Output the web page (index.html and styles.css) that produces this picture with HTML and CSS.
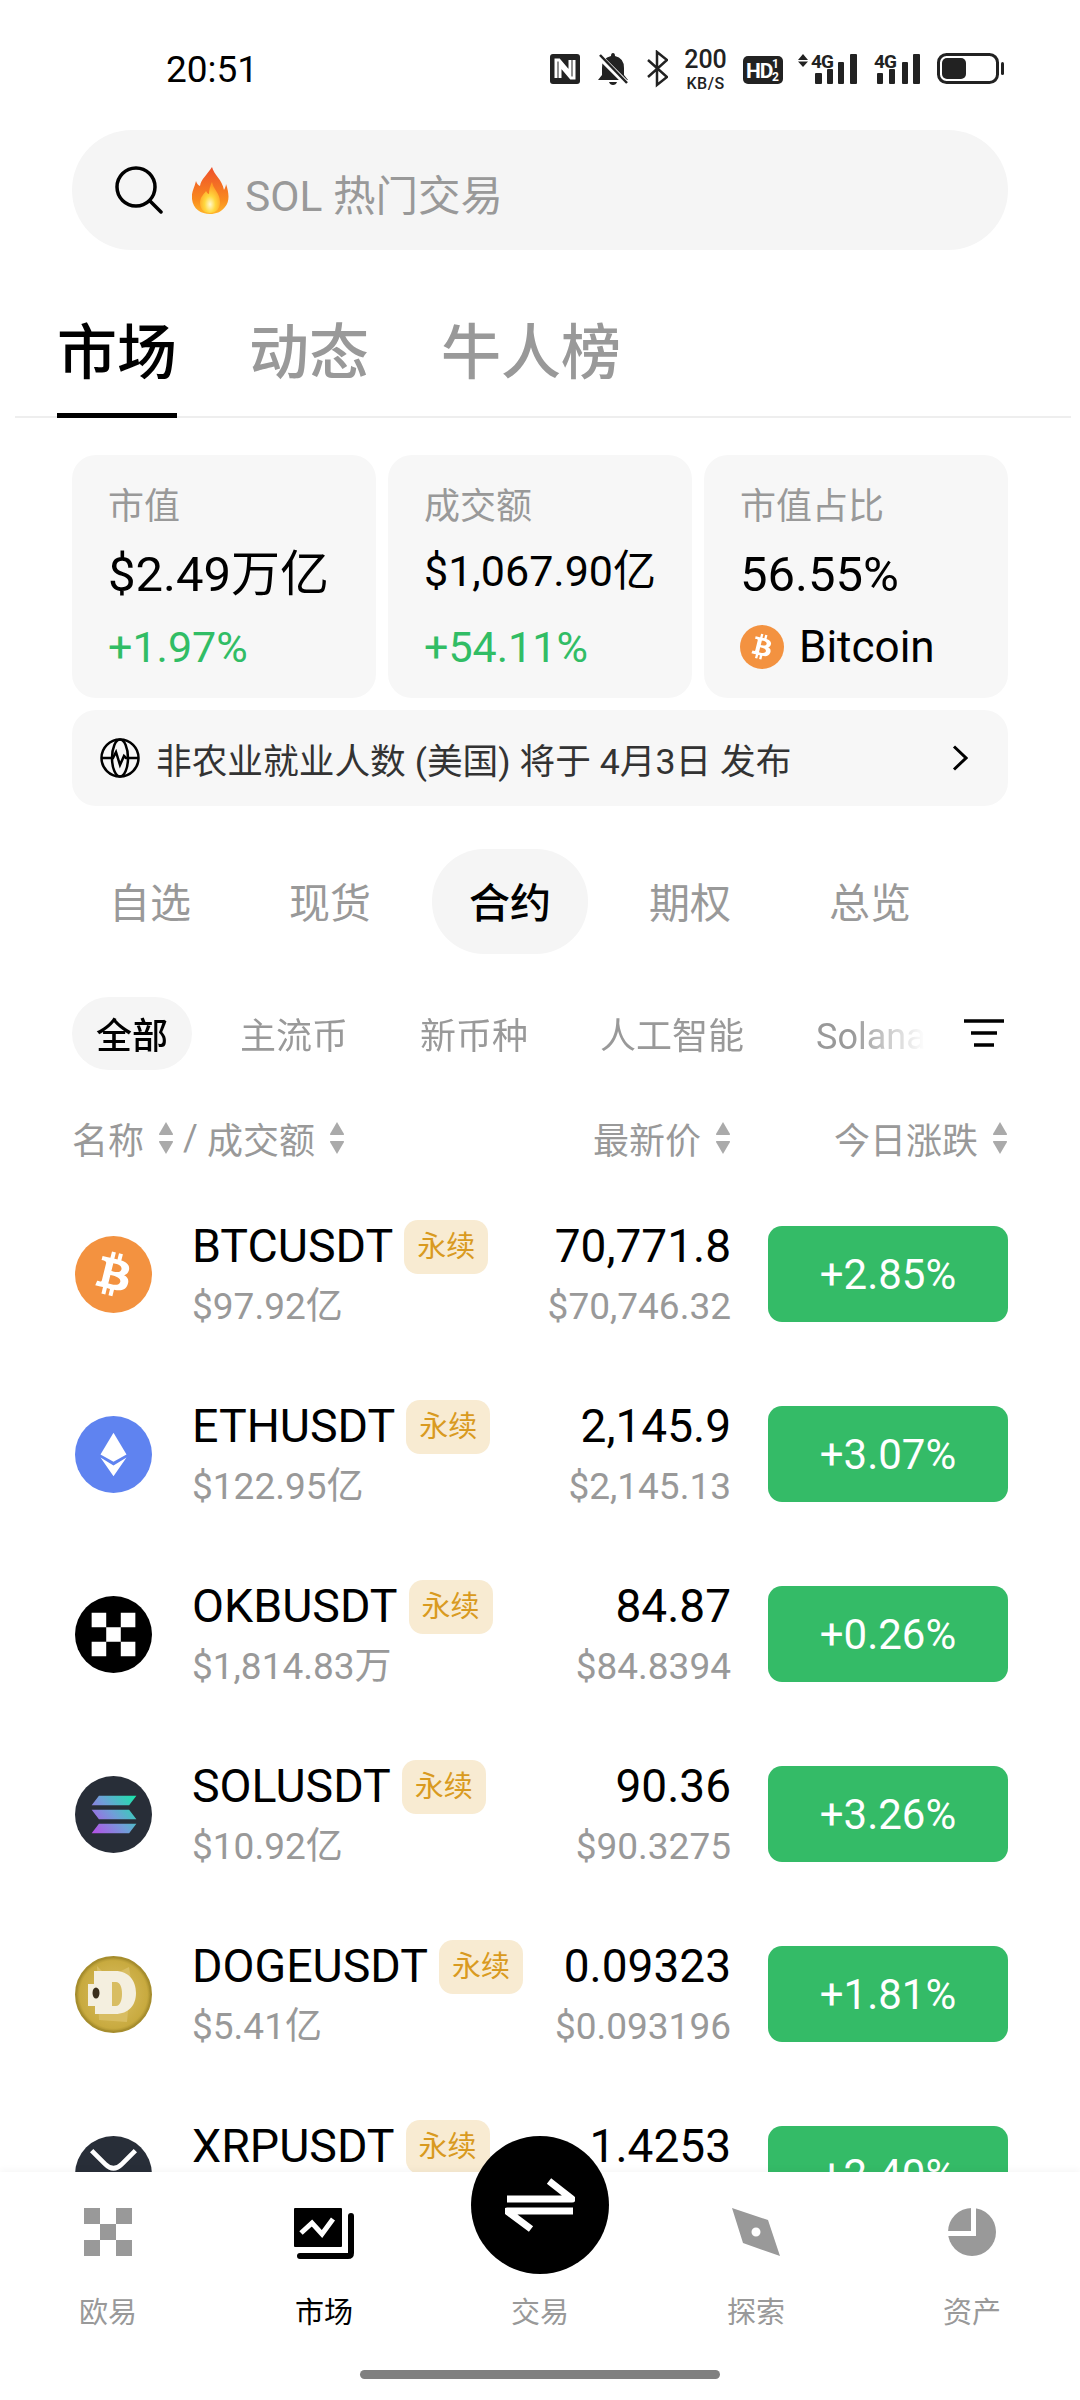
FILE: index.html
```html
<!DOCTYPE html>
<html lang="zh-CN">
<head>
    <meta charset="UTF-8">
    <meta name="viewport" content="width=device-width, initial-scale=1.0">
    <title>市场</title>
    <link rel="stylesheet" href="styles.css">
</head>
<body>
    <svg class="defs" width="0" height="0">
        <defs>
            <symbol id="sort" viewBox="0 0 16 34">
                <path d="M8 1 15 13Q15.500 14 14 14H2Q.5 14 1 13Z"/>
                <path d="M8 33 15 21Q15.500 20 14 20H2Q.5 20 1 21Z"/>
            </symbol>
            <symbol id="btc-b" viewBox="0 0 24 24">
                <path fill-rule="evenodd" d="M17.288 10.291c.24-1.59-.974-2.45-2.64-3.03l.54-2.153-1.315-.33-.525 2.107c-.345-.087-.705-.167-1.064-.25l.526-2.127-1.32-.33-.54 2.165c-.285-.067-.565-.132-.84-.2l-1.815-.45-.35 1.407s.975.225.955.236c.535.136.63.486.615.766l-1.477 5.92c-.075.166-.24.406-.614.314.015.02-.96-.24-.96-.24l-.66 1.51 1.71.426.93.242-.54 2.19 1.32.327.54-2.17c.36.1.705.19 1.05.273l-.51 2.154 1.32.33.545-2.19c2.24.427 3.93.257 4.64-1.774.57-1.637-.03-2.58-1.217-3.196.854-.193 1.5-.76 1.68-1.93h.01zm-3.01 4.22c-.404 1.64-3.157.75-4.05.53l.72-2.9c.896.23 3.757.67 3.33 2.37zm.41-4.24c-.37 1.49-2.662.735-3.405.55l.654-2.64c.744.18 3.137.524 2.75 2.084v.006z"/>
            </symbol>
            <linearGradient id="fire-body" x1="0" y1="0" x2="0" y2="1">
                <stop offset="0" stop-color="#ee4f2b"/>
                <stop offset=".7" stop-color="#f98a1f"/>
                <stop offset="1" stop-color="#ffb52a"/>
            </linearGradient>
            <radialGradient id="fire-core" cx=".5" cy=".72" r=".6">
                <stop offset="0" stop-color="#fff8d0"/>
                <stop offset=".45" stop-color="#ffd83f"/>
                <stop offset="1" stop-color="#ff9d24"/>
            </radialGradient>
            <linearGradient id="sol-bars" gradientUnits="userSpaceOnUse" x1="59" y1="19" x2="16" y2="55">
                <stop offset="0" stop-color="#17e6a8"/>
                <stop offset=".5" stop-color="#6f9fd8"/>
                <stop offset="1" stop-color="#b84de8"/>
            </linearGradient>
            <radialGradient id="doge-coin" cx=".5" cy=".5" r=".5">
                <stop offset="0" stop-color="#dcc168"/>
                <stop offset=".9" stop-color="#c8aa3f"/>
                <stop offset="1" stop-color="#a68d2d"/>
            </radialGradient>
        </defs>
    </svg>

    <div class="app">
        <!-- status bar -->
        <div class="status">
            <span class="time">20:51</span>
            <div class="status-icons">
                <svg width="118" height="38" viewBox="550 50 118 38">
                    <rect x="550" y="54" width="30" height="30" rx="3" fill="#222"/>
                    <path d="M556 78V60H559L570 73V60M574 60V78H571L560 65V78" fill="none" stroke="#fff" stroke-width="3"/>

                    <path d="M613 53Q615 53 615 56Q624 58 624 68V75L628 80H598L602 75V68Q602 58 611 56Q611 53 613 53ZM609 82H617Q616 85 613 85Q610 85 609 82Z" fill="#222"/>
                    <path d="M599 56 627 84" stroke="#fff" stroke-width="6"/>
                    <path d="M600 55 627 83" stroke="#222" stroke-width="2.500"/>

                    <path d="M648 60 667 77 657 85V52L667 60 648 77" fill="none" stroke="#222" stroke-width="2.500"/>
                </svg>
                <div class="speed">
                    <span class="speed-num">200</span>
                    <span class="speed-unit">KB/S</span>
                </div>
                <svg width="261" height="38" viewBox="743 50 261 38">
                    <rect x="743" y="56" width="40" height="28" rx="5" fill="#222"/>
                    <text class="st-hd" x="746" y="78">HD</text>
                    <text class="st-frac" x="772" y="68">1</text>
                    <text class="st-frac" x="772" y="81">2</text>

                    <path d="M803 54 808 60H798ZM803 67 808 61.500H798Z" fill="#222"/>
                    <text class="st-net" x="811" y="68">4G</text>
                    <g fill="#222">
                        <rect x="815" y="73" width="7" height="11" rx="1"/>
                        <rect x="827" y="69" width="6" height="15" rx="1"/>
                        <rect x="838" y="62" width="6" height="22" rx="1"/>
                        <rect x="850" y="54" width="7" height="30" rx="1"/>
                    </g>

                    <text class="st-net" x="874" y="68">4G</text>
                    <g fill="#222">
                        <rect x="877" y="73" width="6" height="11" rx="1"/>
                        <rect x="889" y="69" width="6" height="15" rx="1"/>
                        <rect x="902" y="62" width="6" height="22" rx="1"/>
                        <rect x="913" y="54" width="7" height="30" rx="1"/>
                    </g>

                    <rect x="938.500" y="54.500" width="59" height="28" rx="8" fill="none" stroke="#222" stroke-width="3"/>
                    <rect x="942" y="58" width="24" height="21" rx="5" fill="#222"/>
                    <rect x="1001" y="62" width="3" height="13" rx="1.500" fill="#222"/>
                </svg>
            </div>
        </div>

        <!-- search -->
        <div class="search">
            <svg class="search-icon" width="48" height="48" viewBox="0 0 48 48">
                <circle cx="21" cy="21" r="19" fill="none" stroke="#000" stroke-width="3.500"/>
                <path d="M35 35 46 46" stroke="#000" stroke-width="3.500" stroke-linecap="round"/>
            </svg>
            <svg class="fire-icon" width="37" height="47" viewBox="0 0 37 47">
                <path fill="url(#fire-body)" d="M20 0C22 8 30 12 32 23C33 21 34 19 34 17C37 26 38 34 33 40C29 45 24 47 18 47C9 47 1 42 0 32C-1 26 2 22 4 14C5 17 6 18 8 19C9 12 15 8 20 0Z"/>
                <path fill="url(#fire-core)" d="M20 15C21 22 28 26 28 35C28 42 24 46 18 46C12 46 8 42 8 36C8 30 12 27 14 24C15 26 16 27 17 27C17 23 18 19 20 15Z"/>
            </svg>
            <span class="search-text">SOL 热门交易</span>
        </div>

        <!-- top tabs -->
        <div class="top-tabs">
            <div class="top-tab active">市场</div>
            <div class="top-tab">动态</div>
            <div class="top-tab">牛人榜</div>
        </div>

        <!-- overview cards -->
        <div class="cards">
            <div class="card">
                <div class="card-label">市值</div>
                <div class="card-value">$2.49万亿</div>
                <div class="card-change">+1.97%</div>
            </div>
            <div class="card">
                <div class="card-label">成交额</div>
                <div class="card-value small">$1,067.90亿</div>
                <div class="card-change">+54.11%</div>
            </div>
            <div class="card">
                <div class="card-label">市值占比</div>
                <div class="card-value">56.55%</div>
                <div class="card-coin">
                    <svg width="44" height="44" viewBox="0 0 44 44">
                        <circle cx="22" cy="22" r="22" fill="#f39240"/>
                        <use href="#btc-b" x="1.500" y="1.500" width="41" height="41" fill="#fff"/>
                    </svg>
                    <span>Bitcoin</span>
                </div>
            </div>
        </div>

        <!-- event banner -->
        <div class="banner">
            <svg width="40" height="40" viewBox="0 0 40 40" fill="none" stroke="#000" stroke-width="2.500">
                <circle cx="20" cy="20" r="18.500"/>
                <ellipse cx="20" cy="20" rx="8" ry="18.500"/>
                <path d="M1 20H13L16 14 20 27 24 18 26 20H39"/>
            </svg>
            <span class="banner-text">非农业就业人数 (美国) 将于 4月3日 发布</span>
            <svg class="chevron" width="16" height="26" viewBox="0 0 16 26">
                <path d="M2 1.500 14 13 2 24.500" fill="none" stroke="#000" stroke-width="3"/>
            </svg>
        </div>

        <!-- market type tabs -->
        <div class="type-tabs">
            <div class="type-tab">自选</div>
            <div class="type-tab">现货</div>
            <div class="type-tab active">合约</div>
            <div class="type-tab">期权</div>
            <div class="type-tab">总览</div>
        </div>

        <!-- category filter -->
        <div class="cats">
            <div class="cat-list">
                <div class="cat active">全部</div>
                <div class="cat">主流币</div>
                <div class="cat">新币种</div>
                <div class="cat">人工智能</div>
                <div class="cat">Solana</div>
            </div>
            <svg class="filter-icon" width="40" height="30" viewBox="0 0 40 30">
                <path d="M0 2H40M7 14H33M10 26H30" stroke="#000" stroke-width="3.500"/>
            </svg>
        </div>

        <!-- list header -->
        <div class="list-head">
            <div class="head-name">
                <span>名称</span>
                <svg class="sort"><use href="#sort"/></svg>
                <span class="head-slash">/</span>
                <span>成交额</span>
                <svg class="sort"><use href="#sort"/></svg>
            </div>
            <div class="head-price">
                <span>最新价</span>
                <svg class="sort"><use href="#sort"/></svg>
            </div>
            <div class="head-change">
                <span>今日涨跌</span>
                <svg class="sort"><use href="#sort"/></svg>
            </div>
        </div>

        <!-- rows -->
        <div class="list">
            <div class="row">
                <svg class="coin" viewBox="0 0 74 74">
                    <circle cx="37" cy="37" r="37" fill="#f39240"/>
                    <use href="#btc-b" x="3" y="3" width="68" height="68" fill="#fff"/>
                </svg>
                <div class="row-name">
                    <div class="symbol-line"><span class="symbol">BTCUSDT</span><span class="badge">永续</span></div>
                    <div class="sub">$97.92亿</div>
                </div>
                <div class="row-price">
                    <div class="price">70,771.8</div>
                    <div class="sub">$70,746.32</div>
                </div>
                <div class="change">+2.85%</div>
            </div>

            <div class="row">
                <svg class="coin" viewBox="0 0 74 74">
                    <circle cx="37" cy="37" r="37" fill="#5f83f0"/>
                    <path d="M37 16 49.500 37 37 44 24.500 37Z" fill="#fff"/>
                    <path d="M24.500 40 37 47.500 49.500 40 37 58Z" fill="#fff"/>
                </svg>
                <div class="row-name">
                    <div class="symbol-line"><span class="symbol">ETHUSDT</span><span class="badge">永续</span></div>
                    <div class="sub">$122.95亿</div>
                </div>
                <div class="row-price">
                    <div class="price">2,145.9</div>
                    <div class="sub">$2,145.13</div>
                </div>
                <div class="change">+3.07%</div>
            </div>

            <div class="row">
                <svg class="coin" viewBox="0 0 74 74">
                    <circle cx="37" cy="37" r="37" fill="#000"/>
                    <path d="M16 16H30V30H16ZM44 16H58V30H44ZM30 30H44V44H30ZM16 44H30V58H16ZM44 44H58V58H44Z" fill="#fff"/>
                </svg>
                <div class="row-name">
                    <div class="symbol-line"><span class="symbol">OKBUSDT</span><span class="badge">永续</span></div>
                    <div class="sub">$1,814.83万</div>
                </div>
                <div class="row-price">
                    <div class="price">84.87</div>
                    <div class="sub">$84.8394</div>
                </div>
                <div class="change">+0.26%</div>
            </div>

            <div class="row">
                <svg class="coin" viewBox="0 0 74 74">
                    <circle cx="37" cy="37" r="37" fill="#282e38"/>
                    <path d="M23 19H59L52 28H16ZM16 32.500H52L59 41.500H23ZM23 46H59L52 55H16Z" fill="url(#sol-bars)"/>
                </svg>
                <div class="row-name">
                    <div class="symbol-line"><span class="symbol">SOLUSDT</span><span class="badge">永续</span></div>
                    <div class="sub">$10.92亿</div>
                </div>
                <div class="row-price">
                    <div class="price">90.36</div>
                    <div class="sub">$90.3275</div>
                </div>
                <div class="change">+3.26%</div>
            </div>

            <div class="row">
                <svg class="coin" viewBox="0 0 77 77">
                    <circle cx="38.500" cy="38.500" r="37.500" fill="url(#doge-coin)" stroke="#a68d2d" stroke-width="2"/>
                    <path d="M22 10 27 15H46L54 11 56 24 52 66 24 64Z" fill="#d8bd62"/>
                    <path fill-rule="evenodd" d="M19 15H40C54 15 61 25 61 37C61 49 54 58 40 58H20V50H13V28H19ZM37 26V50H41C45 50 47 44 47 38C47 31 45 26 41 26Z" fill="#f4efdf"/>
                    <ellipse cx="21" cy="37" rx="3.500" ry="5.500" fill="#3a2f1c"/>
                </svg>
                <div class="row-name">
                    <div class="symbol-line"><span class="symbol">DOGEUSDT</span><span class="badge">永续</span></div>
                    <div class="sub">$5.41亿</div>
                </div>
                <div class="row-price">
                    <div class="price">0.09323</div>
                    <div class="sub">$0.093196</div>
                </div>
                <div class="change">+1.81%</div>
            </div>

            <div class="row">
                <svg class="coin" viewBox="0 0 74 74">
                    <circle cx="37" cy="37" r="37" fill="#282e38"/>
                    <path d="M16 14 29 27Q37 35 45 27L58 14M16 60 29 47Q37 39 45 47L58 60" fill="none" stroke="#fff" stroke-width="4.500"/>
                </svg>
                <div class="row-name">
                    <div class="symbol-line"><span class="symbol">XRPUSDT</span><span class="badge">永续</span></div>
                    <div class="sub"></div>
                </div>
                <div class="row-price">
                    <div class="price">1.4253</div>
                    <div class="sub"></div>
                </div>
                <div class="change">+2.40%</div>
            </div>
        </div>

        <!-- bottom nav, sits over the list -->
        <div class="nav">
            <div class="trade-btn">
                <svg width="70" height="60" viewBox="0 0 70 60">
                    <path d="M2 24H67L44 6M68 36H2L26 54" fill="none" stroke="#fff" stroke-width="7" stroke-linejoin="round"/>
                </svg>
            </div>
            <div class="nav-items">
                <div class="nav-item">
                    <div class="nav-icon">
                        <svg width="48" height="48" viewBox="0 0 48 48">
                            <path d="M0 0H16V16H0ZM32 0H48V16H32ZM16 16H32V32H16ZM0 32H16V48H0ZM32 32H48V48H32Z" fill="#999"/>
                        </svg>
                    </div>
                    <span>欧易</span>
                </div>
                <div class="nav-item active">
                    <div class="nav-icon">
                        <svg width="60" height="51" viewBox="0 0 60 51">
                            <rect width="48" height="39" rx="1" fill="#000"/>
                            <path d="M7 25 18 15 28 26 39 11" fill="none" stroke="#fff" stroke-width="5"/>
                            <path d="M57 8V45Q57 48 54 48H6" fill="none" stroke="#000" stroke-width="6" stroke-linecap="round"/>
                        </svg>
                    </div>
                    <span>市场</span>
                </div>
                <div class="nav-item">
                    <div class="nav-icon"></div>
                    <span>交易</span>
                </div>
                <div class="nav-item">
                    <div class="nav-icon">
                        <svg width="48" height="48" viewBox="0 0 48 48">
                            <path fill-rule="evenodd" d="M0 0 36 12 48 48 11 35ZM24 19.500A4.500 4.500 0 1 0 24 28.500 4.500 4.500 0 1 0 24 19.500Z" fill="#999"/>
                        </svg>
                    </div>
                    <span>探索</span>
                </div>
                <div class="nav-item">
                    <div class="nav-icon">
                        <svg width="48" height="48" viewBox="0 0 48 48">
                            <circle cx="24" cy="24" r="24" fill="#999"/>
                            <path d="M25.500 0V25.500H0" fill="none" stroke="#fff" stroke-width="5"/>
                        </svg>
                    </div>
                    <span>资产</span>
                </div>
            </div>
            <div class="home-bar"></div>
        </div>
    </div>
</body>
</html>
```

FILE: styles.css
```css
* {
    margin: 0;
    padding: 0;
    box-sizing: border-box;
}

body {
    font-family: Roboto, "Noto Sans CJK SC", sans-serif;
    background-color: #fff;
    color: #000;
}

.defs {
    position: absolute;
}

.app {
    position: relative;
    width: 1080px;
    height: 2400px;
    overflow: hidden;
}

/* status bar */
.status {
    display: flex;
    align-items: center;
    justify-content: space-between;
    height: 130px;
    padding: 50px 76px 42px 166px;
}

.time {
    margin-top: 1px;
    font-size: 37px;
}

.status-icons {
    display: flex;
    align-items: center;
}

.speed {
    display: flex;
    flex-direction: column;
    align-items: center;
    width: 45px;
    margin: 0 15px;
    color: #222;
    font-weight: 500;
}

.speed-num {
    font-size: 25px;
}

.speed-unit {
    font-size: 16px;
    letter-spacing: .5px;
}

.st-hd {
    font: 700 21px Roboto, sans-serif;
    letter-spacing: -1px;
    fill: #fff;
}

.st-frac {
    font: 700 12px Roboto, sans-serif;
    fill: #fff;
}

.st-net {
    font: 700 19px Roboto, sans-serif;
    letter-spacing: -1px;
    fill: #222;
}

/* search */
.search {
    display: flex;
    align-items: center;
    height: 120px;
    margin: 0 72px;
    padding-left: 43px;
    background-color: #f5f5f5;
    border-radius: 60px;
}

.fire-icon {
    margin-left: 29px;
}

.search-text {
    margin: 4px 0 0 16px;
    font-size: 42.500px;
    color: #999;
}

/* top tabs */
.top-tabs {
    display: flex;
    gap: 72px;
    height: 168px;
    margin: 0 9px 0 15px;
    padding: 0 0 0 42px;
    border-bottom: 2px solid #eee;
}

.top-tab {
    display: flex;
    align-items: flex-start;
    height: 168px;
    padding-top: 69px;
    font-size: 60px;
    line-height: 70px;
    font-weight: 500;
    color: #999;
}

.top-tab.active {
    color: #000;
    border-bottom: 5px solid #000;
}

/* overview cards */
.cards {
    display: grid;
    grid-template-columns: repeat(3, 1fr);
    gap: 12px;
    margin: 37px 72px 0;
}

.card {
    height: 243px;
    padding: 34px 0 0 36px;
    background-color: #f7f7f7;
    border-radius: 24px;
}

.card-label {
    font-size: 36px;
    line-height: 36px;
    color: #999;
}

.card-value {
    height: 60px;
    margin-top: 19px;
    font-size: 49px;
    line-height: 62px;
}

.card-value.small {
    font-size: 43px;
    line-height: 54px;
}

.card-change {
    margin-top: 19px;
    font-size: 43px;
    line-height: 48px;
    color: #31bd65;
}

.card-coin {
    display: flex;
    align-items: center;
    gap: 15px;
    margin-top: 19px;
    font-size: 44px;
    line-height: 48px;
}

/* event banner */
.banner {
    display: flex;
    align-items: center;
    height: 96px;
    margin: 12px 72px 0;
    padding: 0 40px 0 28px;
    background-color: #f7f7f7;
    border-radius: 24px;
}

.banner-text {
    flex: 1;
    margin-left: 16px;
    font-size: 35.700px;
    color: #333;
}

/* market type tabs */
.type-tabs {
    display: flex;
    gap: 24px;
    margin: 43px 72px 0;
}

.type-tab {
    width: 156px;
    height: 105px;
    font-size: 41px;
    line-height: 110px;
    text-align: center;
    border-radius: 52px;
    color: #999;
}

.type-tab.active {
    background-color: #f5f5f5;
    color: #000;
    font-weight: 500;
}

/* category filter */
.cats {
    display: flex;
    align-items: center;
    justify-content: space-between;
    height: 73px;
    margin-top: 43px;
    padding: 0 76px 0 72px;
}

.cat-list {
    display: flex;
    gap: 24px;
    width: 853px;
    overflow: hidden;
    -webkit-mask-image: linear-gradient(to right, #000 780px, transparent 853px);
    mask-image: linear-gradient(to right, #000 780px, transparent 853px);
}

.cat {
    flex-shrink: 0;
    height: 73px;
    padding: 0 24px;
    font-size: 36px;
    line-height: 80px;
    border-radius: 37px;
    color: #999;
}

.cat.active {
    background-color: #f5f5f5;
    color: #000;
    font-weight: 500;
}

/* list header */
.list-head {
    display: flex;
    align-items: center;
    height: 36px;
    margin: 50px 72px 0;
    font-size: 36px;
    color: #999;
}

.head-name,
.head-price,
.head-change {
    display: flex;
    align-items: center;
}

.head-name {
    flex: 1;
}

.head-change {
    justify-content: flex-end;
    width: 240px;
    margin-left: 37px;
}

.head-slash {
    margin: 0 9px;
}

.sort {
    width: 16px;
    height: 34px;
    margin-left: 14px;
    fill: #aaa;
}

/* rows */
.list {
    margin-top: 28px;
    padding: 0 72px;
}

.row {
    display: flex;
    align-items: center;
    height: 180px;
}

.coin {
    flex-shrink: 0;
    width: 77px;
    height: 77px;
    margin-left: 3px;
}

.row-name {
    flex: 1;
    margin-left: 40px;
}

.symbol-line {
    display: flex;
    align-items: center;
    height: 54px;
}

.symbol {
    margin-top: -2px;
    font-size: 46.500px;
}

.badge {
    width: 84px;
    height: 54px;
    margin-left: 11px;
    font-size: 29px;
    line-height: 54px;
    text-align: center;
    color: #d99a20;
    background-color: #f8ebd2;
    border-radius: 14px;
}

.sub {
    height: 44px;
    margin-top: 11px;
    font-size: 37px;
    line-height: 44px;
    color: #999;
}

.row-price {
    text-align: right;
}

.price {
    height: 54px;
    font-size: 46px;
    line-height: 52px;
}

.change {
    flex-shrink: 0;
    width: 240px;
    height: 96px;
    margin-left: 37px;
    font-size: 42px;
    line-height: 98px;
    text-align: center;
    color: #fff;
    background-color: #34bb67;
    border-radius: 14px;
}

/* bottom nav */
.nav {
    position: absolute;
    left: 0;
    right: 0;
    bottom: 0;
    height: 228px;
    padding-top: 36px;
    background-color: #fff;
    box-shadow: 0 -3px 6px rgba(0, 0, 0, 0.03);
}

.trade-btn {
    position: absolute;
    left: 471px;
    top: -36px;
    display: flex;
    align-items: center;
    justify-content: center;
    width: 138px;
    height: 138px;
    background-color: #000;
    border-radius: 50%;
}

.nav-items {
    display: grid;
    grid-template-columns: repeat(5, 1fr);
}

.nav-item {
    text-align: center;
    font-size: 29px;
    line-height: 36px;
    color: #999;
}

.nav-item.active {
    color: #000;
}

.nav-icon {
    height: 52px;
    margin-bottom: 35px;
}

.home-bar {
    width: 360px;
    height: 9px;
    margin: 39px auto 0;
    background-color: #808080;
    border-radius: 5px;
}
```
